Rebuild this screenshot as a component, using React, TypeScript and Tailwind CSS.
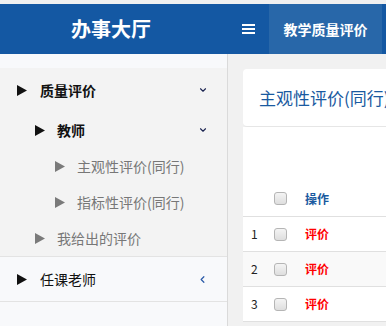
import { ChevronDown, ChevronLeft } from 'lucide-react';

const font = { fontFamily: '"Noto Sans CJK SC", "Noto Sans", sans-serif' };

function Tri({ gray }: { gray?: boolean }) {
  return (
    <svg width="10" height="11" viewBox="0 0 10 11" className="shrink-0">
      <polygon points="0,0 10,5.5 0,11" fill={gray ? '#7a7a7a' : '#111111'} />
    </svg>
  );
}

function Checkbox() {
  return <div className="w-[13px] h-[13px] rounded-[3px] border border-[#b5b5b5] bg-gradient-to-b from-[#f4f4f4] to-[#dedede]" />;
}

const rows = [1, 2, 3];

export default function App() {
  return (
    <div className="w-[386px] h-[326px] overflow-hidden bg-[#f1f1f1] flex flex-col" style={font}>
      <div className="h-[4px] bg-[#f0f0f0]" />
      <div className="h-[50px] bg-[#1458a3] flex items-stretch shrink-0">
        <div className="w-[222px] flex items-center justify-center text-white font-bold text-[20px]">办事大厅</div>
        <div className="w-[47px] flex items-center justify-center">
          <div className="flex flex-col gap-[2px] pl-[6px]">
            <div className="w-[13px] h-[2px] bg-white" />
            <div className="w-[13px] h-[2px] bg-white" />
            <div className="w-[13px] h-[2px] bg-white" />
          </div>
        </div>
        <div className="w-[113px] bg-[#2867a9] flex items-center justify-center text-white font-bold text-[14px]">教学质量评价</div>
      </div>

      <div className="flex flex-1">
        <div className="w-[228px] shrink-0 border-r border-[#dadada] bg-[#f8f9fb] flex flex-col">
          <div className="h-[14px]" />
          <div className="bg-[#f3f3f3] border-b border-[#e3e3e3]">
            <div className="h-[44px] flex items-center pl-[17px] pr-[19px]">
              <Tri />
              <span className="ml-[13px] text-[14px] font-bold text-[#111]">质量评价</span>
              <ChevronDown className="ml-auto text-[#1a2350]" size={10} strokeWidth={2.6} />
            </div>
            <div className="h-[36px] flex items-center pl-[35px] pr-[19px]">
              <Tri />
              <span className="ml-[12px] text-[14px] font-bold text-[#111]">教师</span>
              <ChevronDown className="ml-auto text-[#1a2350]" size={10} strokeWidth={2.6} />
            </div>
            <div className="h-[36px] flex items-center pl-[55px]">
              <Tri gray />
              <span className="ml-[12px] text-[14px] text-[#777]">主观性评价(同行)</span>
            </div>
            <div className="h-[36px] flex items-center pl-[55px]">
              <Tri gray />
              <span className="ml-[12px] text-[14px] text-[#777]">指标性评价(同行)</span>
            </div>
            <div className="h-[36px] flex items-center pl-[35px]">
              <Tri gray />
              <span className="ml-[12px] text-[14px] text-[#777]">我给出的评价</span>
            </div>
          </div>
          <div className="h-[45px] flex items-center pl-[17px] pr-[19px] border-b border-[#e3e3e3]">
            <Tri />
            <span className="ml-[13px] text-[14px] text-[#111]">任课老师</span>
            <ChevronLeft className="ml-auto text-[#2a5aa8]" size={11} strokeWidth={2.6} />
          </div>
        </div>

        <div className="flex-1 pl-[15px] pt-[15px] min-w-0">
          <div className="bg-white rounded-l-[4px] border-b border-[#e6e6e6] h-[58px] flex items-center pl-[16px] whitespace-nowrap overflow-hidden">
            <span className="text-[17px] text-[#1a5aa0]">主观性评价(同行)</span>
          </div>
          <div className="bg-white">
            <div className="h-[54px]" />
            <div className="h-[36px] flex items-center border-b border-[#e0e0e0]">
              <div className="w-[25px]" />
              <div className="w-[37px] pl-[6px]"><Checkbox /></div>
              <span className="text-[12px] font-bold text-[#1a5aa0]">操作</span>
            </div>
            {rows.map(n => (
              <div key={n} className={`h-[35px] flex items-center border-b border-[#e0e0e0] ${n === 2 ? 'bg-[#f9f9f9]' : 'bg-white'}`}>
                <div className="w-[25px] pl-[8px] text-[12px] text-[#222]">{n}</div>
                <div className="w-[37px] pl-[6px]"><Checkbox /></div>
                <span className="text-[12px] font-bold text-[#ff0000]">评价</span>
              </div>
            ))}
          </div>
        </div>
      </div>
    </div>
  );
}
